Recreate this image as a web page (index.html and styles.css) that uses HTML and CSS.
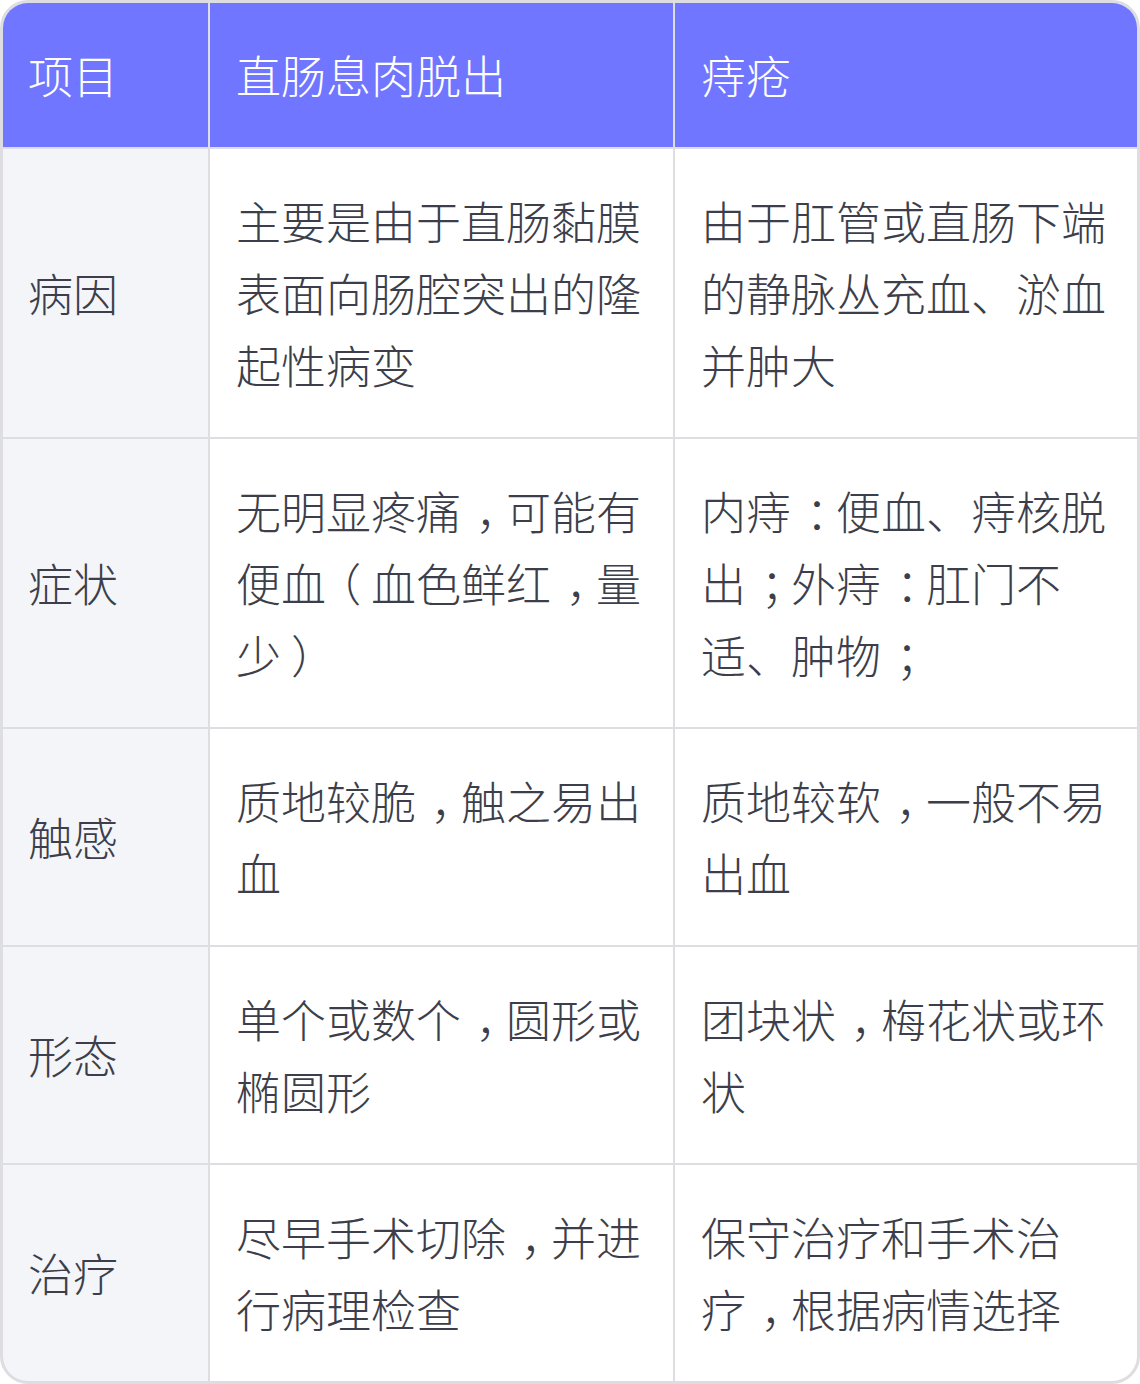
FILE: index.html
```html
<!DOCTYPE html>
<html lang="zh-CN">
<head>
<meta charset="utf-8">
<link rel="stylesheet" href="styles.css">
</head>
<body>
<div class="table">
  <div class="cell head first">项目</div>
  <div class="cell head">直肠息肉脱出</div>
  <div class="cell head">痔疮</div>

  <div class="cell label">病因</div>
  <div class="cell">主要是由于直肠黏膜表面向肠腔突出的隆起性病变</div>
  <div class="cell">由于肛管或直肠下端的静脉丛充血、淤血并肿大</div>

  <div class="cell label">症状</div>
  <div class="cell">无明显疼痛<span class="tp">，</span>可能有便血<span class="po">（</span>血色鲜红<span class="tp">，</span>量少<span class="pc">）</span></div>
  <div class="cell">内痔<span class="tp">：</span>便血、痔核脱出<span class="tp">；</span>外痔<span class="tp">：</span>肛门不适、肿物<span class="tp">；</span></div>

  <div class="cell label">触感</div>
  <div class="cell">质地较脆<span class="tp">，</span>触之易出血</div>
  <div class="cell">质地较软<span class="tp">，</span>一般不易出血</div>

  <div class="cell label">形态</div>
  <div class="cell">单个或数个<span class="tp">，</span>圆形或椭圆形</div>
  <div class="cell">团块状<span class="tp">，</span>梅花状或环状</div>

  <div class="cell label">治疗</div>
  <div class="cell">尽早手术切除<span class="tp">，</span>并进行病理检查</div>
  <div class="cell">保守治疗和手术治疗<span class="tp">，</span>根据病情选择</div>
</div>
</body>
</html>
```

FILE: styles.css
```css
html, body {
  margin: 0;
  padding: 0;
  background: #ffffff;
}

.table {
  width: 1140px;
  box-sizing: border-box;
  border: 3px solid #dddde2;
  border-radius: 28px;
  overflow: hidden;
  display: grid;
  grid-template-columns: 205px 463px 462px;
  gap: 2px;
  background: #dddde2;
  font-family: "Noto Sans CJK SC", "Noto Sans", sans-serif;
  font-weight: 300;
  font-size: 45px;
  line-height: 72px;
  color: #3c3f4b;
}

.cell {
  background: #ffffff;
  padding: 36px 27px 36px 26px;
}

.head {
  background: #7076ff;
  color: #ffffff;
}

.first {
  padding-left: 25px;
}

.label {
  background: #f4f5f9;
  padding-left: 25px;
  display: flex;
  align-items: center;
}

/* centred full-width punctuation */
.tp {
  position: relative;
  left: 0.33em;
}

.po {
  position: relative;
  left: -0.22em;
}

.pc {
  position: relative;
  left: 0.22em;
}
```
